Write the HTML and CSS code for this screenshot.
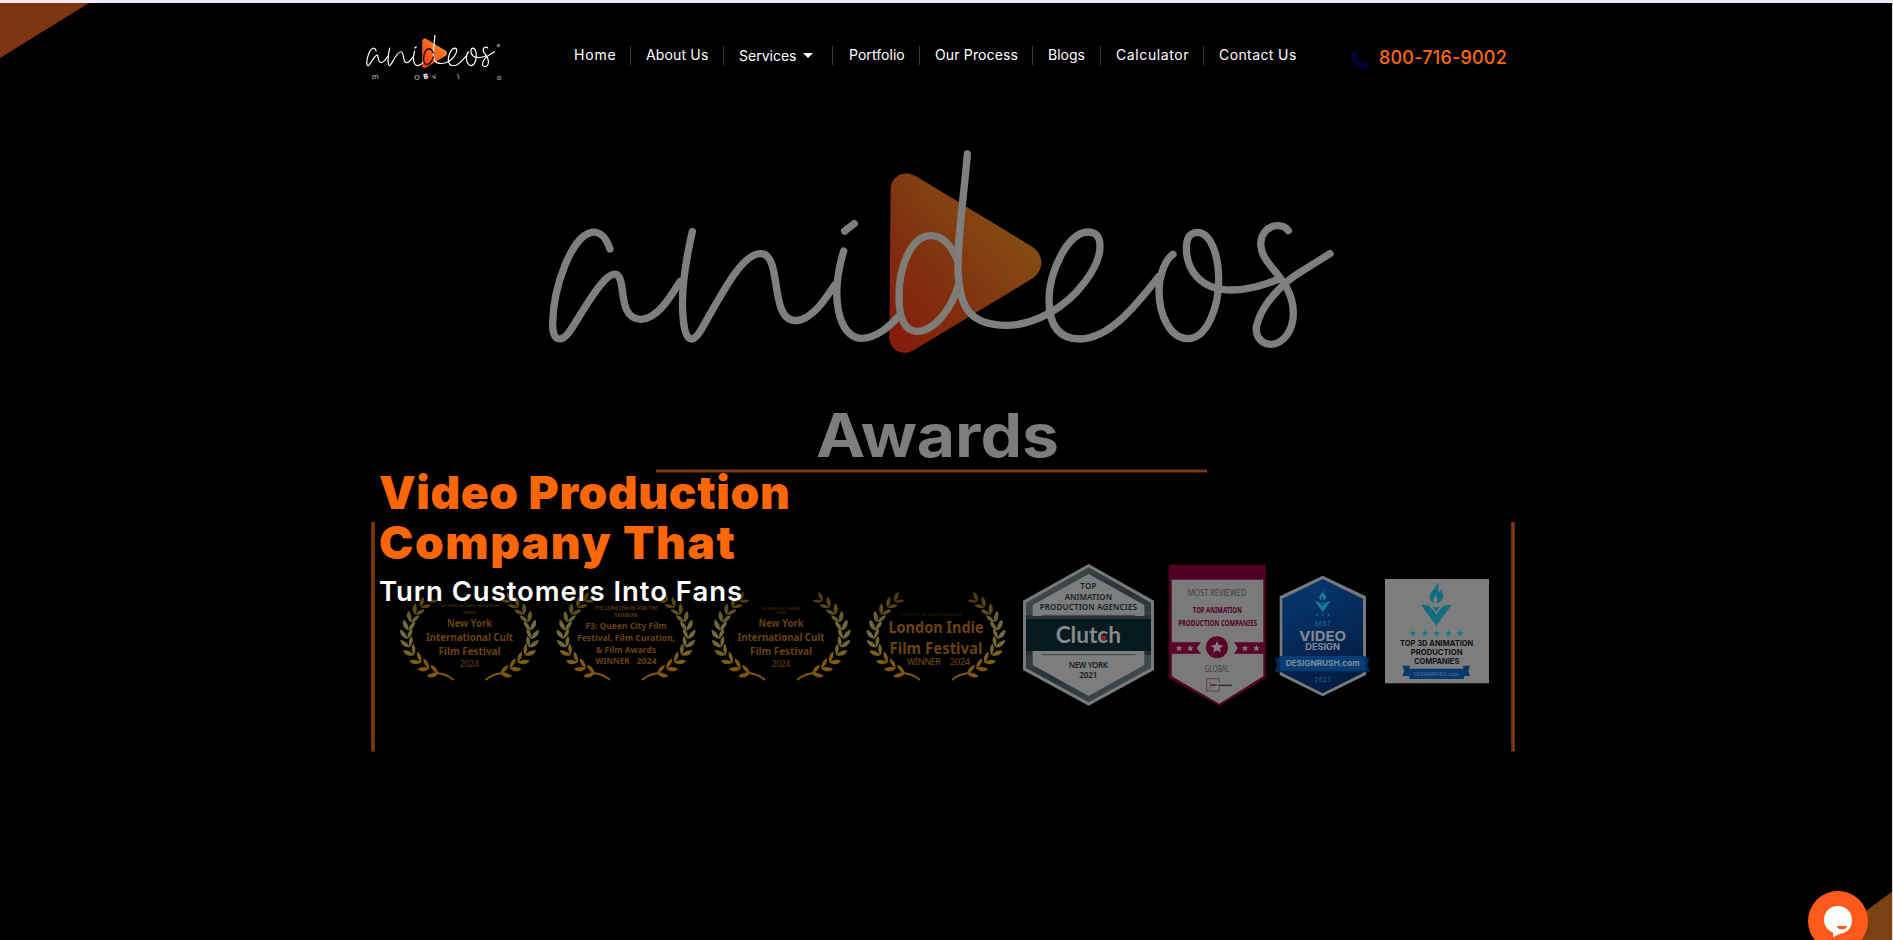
FILE: index.html
```html
<!DOCTYPE html>
<html lang="en">
<head>
<meta charset="utf-8">
<title>Anideos</title>
<link rel="stylesheet" href="styles.css">
</head>
<body>
<div class="page">
  <svg class="backdrop" viewBox="0 0 1893 940" width="1893" height="940" aria-hidden="true">
    <defs>
      <linearGradient id="playDim" x1="0" y1="1" x2="0.8" y2="0.2">
        <stop offset="0" stop-color="#85190b"/><stop offset="0.5" stop-color="#80330f"/><stop offset="1" stop-color="#864d13"/>
      </linearGradient>
      <linearGradient id="playBright" x1="0" y1="1" x2="0.8" y2="0.2">
        <stop offset="0" stop-color="#ff3a16"/><stop offset="0.5" stop-color="#ff5a1c"/><stop offset="1" stop-color="#ff8a24"/>
      </linearGradient>
      <linearGradient id="blue" x1="0" y1="0" x2="0.3" y2="1">
        <stop offset="0" stop-color="#073a72"/><stop offset="1" stop-color="#031c44"/>
      </linearGradient>
      <linearGradient id="steel" x1="0" y1="0" x2="1" y2="1">
        <stop offset="0" stop-color="#4a5254"/><stop offset="0.5" stop-color="#283235"/><stop offset="1" stop-color="#4a5254"/>
      </linearGradient>
      <path id="play" d="M1082 178C1082 136 1125 118 1158 139L1508 351C1543 375 1543 420 1508 445L1152 660C1118 682 1077 658 1078 622Z"/>
      <g id="script" fill="none" stroke-linecap="round" stroke-linejoin="round">
        <path d="M240 357C228 322 208 303 185 307C125 318 70 470 68 580C67 638 95 635 116 608C150 562 220 424 258 433C292 445 258 566 333 568C385 566 425 494 450 455"/>
        <path d="M487 305C465 400 452 500 460 570C467 640 490 637 510 605C560 522 630 372 690 371C760 368 715 567 795 572C845 572 890 502 914 465"/>
        <path d="M941 363C921 430 915 490 925 540C935 592 960 625 995 625C1040 623 1075 592 1105 560M944 303L973 281"/>
        <path d="M1312 72C1302 200 1278 350 1285 440C1292 520 1310 586 1430 586C1480 586 1520 570 1560 548C1640 505 1710 410 1710 350C1710 322 1700 306 1672 306C1610 310 1557 430 1557 510C1557 590 1590 627 1650 627C1745 625 1830 510 1886 440"/>
        <path d="M1929 373C1900 393 1887 450 1887 480C1887 560 1922 624 1973 626C2032 625 2066 530 2066 450C2066 370 2040 307 2002 307C1977 307 1969 330 1969 355C1970 420 2010 480 2105 480C2165 479 2205 462 2245 448"/>
        <path d="M2275 302C2266 288 2252 286 2240 287C2210 290 2189 315 2193 350C2198 410 2290 448 2290 550C2290 608 2255 643 2223 643C2190 643 2171 611 2182 580C2200 514 2268 452 2310 427C2340 408 2370 390 2400 371"/>
      </g>
      <path id="bowl" fill="none" stroke-linecap="round" d="M1284 395C1262 340 1232 317 1203 317C1148 317 1107 400 1107 500C1107 570 1128 604 1160 604C1215 604 1268 530 1285 465"/>
      <path id="leaves" d="M0 1C-6-1-8-5-7-10C-3-8 0-4 0 1ZM0 1C5-2 7-6 6-10C2-8 0-4 0 1Z"/>
      <g id="branch">
        <path d="M-16 100Q-24 93-35 93" fill="none" stroke="#80560c" stroke-width="1.800"/>
        <use href="#leaves" transform="translate(-32 93) rotate(-72) scale(.92)" fill="#80560c"/>
        <use href="#leaves" transform="translate(-41 88) rotate(-60) scale(.92)" fill="#80560c"/>
        <use href="#leaves" transform="translate(-49 82) rotate(-48) scale(.92)" fill="#7c5c15"/>
        <use href="#leaves" transform="translate(-56 74.500) rotate(-34) scale(.92)" fill="#786323"/>
        <use href="#leaves" transform="translate(-60 66.500) rotate(-20) scale(.92)" fill="#736733"/>
        <use href="#leaves" transform="translate(-62 58) rotate(-6) scale(.92)" fill="#706a3a"/>
        <use href="#leaves" transform="translate(-61 49.500) rotate(8) scale(.92)" fill="#706a3a"/>
        <use href="#leaves" transform="translate(-58.500 41.500) rotate(22) scale(.9)" fill="#665e2c"/>
        <use href="#leaves" transform="translate(-54 34) rotate(34) scale(.88)" fill="#5c4d1a"/>
        <use href="#leaves" transform="translate(-48 27) rotate(46) scale(.85)" fill="#574412"/>
        <use href="#leaves" transform="translate(-41 21) rotate(58) scale(.8)" fill="#523c0e"/>
      </g>
      <g id="wreath"><use href="#branch"/><use href="#branch" transform="scale(-1 1)"/></g>
      <path id="star" d="M0-10L3-3.5 10-3 4.5 1.5 6.2 8.5 0 4.8-6.2 8.5-4.5 1.5-10-3-3-3.500Z"/>
      <g id="torch">
        <path d="M-46 58L0 122L46 58L26 60Q14 66 0 88Q-14 66-26 60ZM-12 62L0 80L12 62Q0 70-12 62Z"/>
        <path d="M2-10C12 5 0 12 10 20Q14 16 13 10C28 32 20 48-2 56C8 42 2 36-2 28C-6 38-10 42-6 54C-26 42-22 26-10 14Q2 2 2-10Z"/>
      </g>
    </defs>

    <path d="M0 3H89L0 58Z" fill="#7f3512"/>
    <path d="M1893 891V940H1826Z" fill="#7a4214"/>

    <g transform="translate(530 130) scale(.33333)">
      <use href="#play" fill="url(#playDim)"/>
      <use href="#script" stroke="#7f7f7f" stroke-width="22"/>
      <use href="#bowl" stroke="#7f7c76" stroke-width="22"/>
    </g>

    <text class="awards" x="816" y="457" textLength="243" lengthAdjust="spacingAndGlyphs">Awards</text>
    <path d="M656 471H1207" stroke="#7b390e" stroke-width="3"/>
    <path d="M373 522V751.500M1513 522V751.500" stroke="#7d390b" stroke-width="3.600"/>

    <g transform="translate(469.500 580)">
      <use href="#wreath"/>
      <g class="laurel">
        <text class="tiny" y="26.500" textLength="59" lengthAdjust="spacingAndGlyphs">THE LEPRECHAUN AND THE RAINBOW</text>
        <text class="tiny" y="34" textLength="13" lengthAdjust="spacingAndGlyphs">WINNER</text>
        <text class="mid" y="47" textLength="45" lengthAdjust="spacingAndGlyphs">New York</text>
        <text class="mid" y="61" textLength="87" lengthAdjust="spacingAndGlyphs">International Cult</text>
        <text class="mid" y="75" textLength="62" lengthAdjust="spacingAndGlyphs">Film Festival</text>
        <text class="year" y="87" textLength="19">2024</text>
      </g>
    </g>
    <g transform="translate(626 580)">
      <use href="#wreath"/>
      <g class="laurel">
        <text class="tiny small" y="30" textLength="63" lengthAdjust="spacingAndGlyphs">THE LEPRECHAUN AND THE</text>
        <text class="tiny small" y="36.500" textLength="23" lengthAdjust="spacingAndGlyphs">RAINBOW</text>
        <text class="low" y="48.500" textLength="81" lengthAdjust="spacingAndGlyphs">F3: Queen City Film</text>
        <text class="low" y="60.500" textLength="98" lengthAdjust="spacingAndGlyphs">Festival, Film Curation,</text>
        <text class="low" y="72.500" textLength="60" lengthAdjust="spacingAndGlyphs">&amp; Film Awards</text>
        <text class="low" x="-13.500" y="84" textLength="34" lengthAdjust="spacingAndGlyphs">WINNER</text>
        <text class="low" x="20.500" y="84" textLength="20" lengthAdjust="spacingAndGlyphs">2024</text>
      </g>
    </g>
    <g transform="translate(781 580)">
      <use href="#wreath"/>
      <g class="laurel">
        <text class="tiny" y="30" textLength="39" lengthAdjust="spacingAndGlyphs">THE LEPRECHAUN AND THE RAINBOW</text>
        <text class="tiny" y="34" textLength="9" lengthAdjust="spacingAndGlyphs">WINNER</text>
        <text class="mid" y="47" textLength="45" lengthAdjust="spacingAndGlyphs">New York</text>
        <text class="mid" y="61" textLength="87" lengthAdjust="spacingAndGlyphs">International Cult</text>
        <text class="mid" y="75" textLength="62" lengthAdjust="spacingAndGlyphs">Film Festival</text>
        <text class="year" y="87" textLength="19">2024</text>
      </g>
    </g>
    <g transform="translate(936 580)">
      <use href="#wreath"/>
      <g class="laurel">
        <text class="tiny faint" x="-4" y="35.500" textLength="60" lengthAdjust="spacingAndGlyphs">THE LEPRECHAUN AND THE RAINBOW</text>
        <text class="big" y="52.500" textLength="95" lengthAdjust="spacingAndGlyphs">London Indie</text>
        <text class="big" y="73.500" textLength="93" lengthAdjust="spacingAndGlyphs">Film Festival</text>
        <text class="low thin" x="-12" y="85" textLength="34">WINNER</text>
        <text class="low thin" x="24" y="85" textLength="20">2024</text>
      </g>
    </g>

    <g transform="translate(1010 550) scale(.33333)" class="badge">
      <path d="M236 42L432 152V360L236 467L39 360V152Z" fill="#777a7b"/>
      <path d="M236 52L423 158V354L236 457L48 354V158Z" fill="url(#steel)"/>
      <path d="M236 72L403 165V345L236 438L68 345V165Z" fill="#7b7d7e"/>
      <path d="M48 196H423V315H48Z" fill="#273135"/>
      <path d="M68 303H403V318H68ZM68 190H403V198H68Z" fill="#7b7d7e"/>
      <path d="M48 207H423V303H48Z" fill="#071a20"/>
      <path d="M95 196H376M95 314H376" stroke="#3d4446" stroke-width="3"/>
      <g fill="#181c1e" class="clutch-copy">
        <text x="235" y="116" textLength="48">TOP</text>
        <text x="235" y="149" textLength="142">ANIMATION</text>
        <text x="235" y="181" textLength="292">PRODUCTION AGENCIES</text>
        <text x="235" y="353" textLength="118">NEW YORK</text>
        <text x="235" y="385" textLength="54">2021</text>
      </g>
      <text class="clutch-name" x="235" y="279" textLength="196" lengthAdjust="spacingAndGlyphs">Clutch</text>
      <circle cx="282" cy="264" r="8" fill="#8a211b"/>

      <path d="M476 44H767V384L628 468L476 384Z" fill="#520022"/>
      <path d="M485 89H760V379L628 461L485 379Z" fill="#7b7a7b"/>
      <path d="M478 277H573L560 294L573 311H478ZM766 277H672L684 294L672 311H766Z" fill="#5a0429"/>
      <circle cx="621" cy="292" r="33" fill="#5a0429"/>
      <g fill="#85787e">
        <use href="#star" transform="translate(621 292) scale(1.900)"/>
        <use href="#star" transform="translate(507 295)"/><use href="#star" transform="translate(541 295)"/>
        <use href="#star" transform="translate(705 295)"/><use href="#star" transform="translate(739 295)"/>
      </g>
      <text class="cond gray" x="621" y="138" textLength="176" lengthAdjust="spacingAndGlyphs">MOST REVIEWED</text>
      <text class="cond wine" x="622" y="190" textLength="147" lengthAdjust="spacingAndGlyphs">TOP ANIMATION</text>
      <text class="cond wine" x="623" y="228" textLength="237" lengthAdjust="spacingAndGlyphs">PRODUCTION COMPANIES</text>
      <text class="cond gray" x="621" y="365" textLength="73" lengthAdjust="spacingAndGlyphs">GLOBAL</text>
      <path d="M628 386H590V423H628V412M628 386V398M600 396V417" fill="none" stroke="#613b46" stroke-width="3"/>
      <path d="M603 405H620" stroke="#52222f" stroke-width="5"/><path d="M624 406H666" stroke="#333" stroke-width="5"/>
    </g>

    <g transform="translate(1260 550) scale(.33333)" class="badge">
      <path d="M188 77L318 139V375L188 439L59 375V139Z" fill="#77797c"/>
      <path d="M188 87L309 146V369L188 430L67 369V146Z" fill="url(#blue)"/>
      <path d="M43 323H330L323 344L330 367H43L51 344Z" fill="#04284f"/>
      <path d="M59 318H317V362H59Z" fill="#073d74"/>
      <use href="#torch" transform="translate(188 125) scale(.500)" fill="#137f9a"/>
      <g fill="#137f9a"><use href="#star" transform="translate(170 194) scale(.400)"/><use href="#star" transform="translate(188 194) scale(.400)"/><use href="#star" transform="translate(206 194) scale(.400)"/></g>
      <text class="geo teal" x="188" y="229" textLength="48">BEST</text>
      <text class="geo video" x="188" y="272" textLength="140" lengthAdjust="spacingAndGlyphs">VIDEO</text>
      <text class="geo design" x="188" y="299" textLength="104" lengthAdjust="spacingAndGlyphs">DESIGN</text>
      <text class="geo site" x="188" y="348" textLength="222" lengthAdjust="spacingAndGlyphs">DESIGNRUSH.com</text>
      <text class="geo teal" x="188" y="396" textLength="49">2023</text>

      <path d="M375 87H687V400H375Z" fill="#7d7d7e"/>
      <use href="#torch" transform="translate(529 106)" fill="#126d83"/>
      <g fill="#137b91"><use href="#star" transform="translate(459 250)"/><use href="#star" transform="translate(495 250)"/><use href="#star" transform="translate(530 250)"/><use href="#star" transform="translate(565 250)"/><use href="#star" transform="translate(600 250)"/></g>
      <g class="geo dark">
        <text x="530" y="289" textLength="220" lengthAdjust="spacingAndGlyphs">TOP 3D ANIMATION</text>
        <text x="530" y="316" textLength="155" lengthAdjust="spacingAndGlyphs">PRODUCTION</text>
        <text x="530" y="343" textLength="136" lengthAdjust="spacingAndGlyphs">COMPANIES</text>
      </g>
      <path d="M427 347H449V378H427L433 362ZM630 347H610V378H630L625 362Z" fill="#063867"/>
      <path d="M448 356H612V387H448Z" fill="#06396f"/>
      <text class="geo mini" x="529" y="377" textLength="134" lengthAdjust="spacingAndGlyphs">DESIGNRUSH.com</text>
    </g>
  </svg>

  <header class="header">
    <a class="logo">
      <svg width="140" height="52" viewBox="0 0 140 52">
        <g transform="translate(0 -1.600) scale(.0548)">
          <use href="#play" fill="url(#playBright)"/>
          <use href="#script" stroke="#fff" stroke-width="22"/>
          <use href="#bowl" stroke="#1b0b06" stroke-width="24"/>
        </g>
        <circle cx="135.500" cy="12.500" r="1.700" fill="#777"/>
        <g class="logo-copy">
          <text transform="translate(9 46.500) rotate(-8)">m</text>
          <text transform="translate(51 46.500)">O</text>
          <text class="block" transform="translate(61 46.500) rotate(-15)">B</text>
          <text transform="translate(70 46.500) rotate(-20)">v</text>
          <text transform="translate(95 46.500) rotate(-15)">l</text>
          <text transform="translate(133.500 46.500) rotate(12)">o</text>
        </g>
      </svg>
    </a>
    <nav class="nav">
      <a class="item home">Home</a>
      <a class="item about">About Us</a>
      <a class="item services">Services<span class="caret"></span></a>
      <a class="item portfolio">Portfolio</a>
      <a class="item process">Our Process</a>
      <a class="item blogs">Blogs</a>
      <a class="item calc">Calculator</a>
      <a class="item contact">Contact Us</a>
    </nav>
    <a class="phone">
      <svg width="18" height="18" viewBox="0 0 18 18"><path d="M0 2Q0 1 1 .7L4.300 0Q5.300-.1 5.800 1L7.200 4.600Q7.500 5.500 6.800 6.200L5 7.700Q6.700 11.300 10.200 13L11.800 11.200Q12.500 10.500 13.400 10.900L17 12.400Q18 12.900 17.900 13.800L17.200 17Q16.900 18 15.900 18C7 18 0 11 0 2Z" fill="#00043c"/></svg>
      <span>800-716-9002</span>
    </a>
  </header>

  <main class="hero">
    <h1 class="title"><span class="line one">Video Production</span><span class="line two">Company That</span></h1>
    <p class="subtitle">Turn Customers Into Fans</p>
  </main>

  <button class="chat" aria-label="Chat">
    <svg width="60" height="60" viewBox="0 0 60 60">
      <circle cx="30" cy="30" r="30" fill="#ff5a1c"/>
      <path d="M30 15C22 15 16 21 16 29C16 35 20 39.500 25 41.500V46L33 42.500C40 41.500 44 36 44 29C44 21 38 15 30 15Z" fill="#fff"/>
      <path d="M28.500 35H39Q38 38.500 34 38.500T28.500 35Z" fill="#ff5a1c"/>
    </svg>
  </button>
</div>
</body>
</html>
```
FILE: styles.css
```css
* { box-sizing: border-box; }

body {
  margin: 0;
  background: #000;
  font-family: Inter, "Open Sans", sans-serif;
  color: #fff;
}

.page {
  position: relative;
  width: 1893px;
  height: 940px;
  overflow: hidden;
  background: #000;
  border-top: 3px solid #f2eaf5;
  border-right: 1px solid #dcdcdc;
}

.backdrop {
  position: absolute;
  top: -3px;
  left: 0;
}

.header {
  position: relative;
  display: flex;
  align-items: flex-start;
  padding: 30px 0 0 363px;
  height: 104px;
}

.logo { width: 140px; margin-right: 56px; }
.logo svg { display: block; }
.logo-copy { font: 600 7.500px "Noto Sans", sans-serif; fill: #999; }
.logo-copy .block { font-weight: 900; fill: #ddd; }

.nav { display: flex; padding-top: 13px; }
.item {
  height: 19px;
  padding-left: 15px;
  border-right: 1px solid #393939;
  font-size: 14px;
  line-height: 18px;
  white-space: nowrap;
}
.home { width: 72px; letter-spacing: 0.8px; }
.about { width: 93px; letter-spacing: 0.15px; }
.services { display: flex; align-items: center; width: 109px; }
.portfolio { width: 87px; padding-left: 16px; letter-spacing: 0.05px; }
.process { width: 113px; letter-spacing: 0.15px; }
.blogs { width: 68px; }
.calc { width: 103px; letter-spacing: 0.6px; }
.contact { width: 94px; border-right: 0; letter-spacing: 0.4px; }
.caret {
  margin-left: 7px;
  border: 5.5px solid transparent;
  border-top: 5.5px solid #fff;
  border-bottom: 0;
}

.phone {
  display: flex;
  align-items: center;
  gap: 10px;
  margin: 14px 0 0 53px;
  font-size: 18px;
  font-weight: 500;
  letter-spacing: 0.2px;
  line-height: 22px;
  color: #ff6a0a;
  white-space: nowrap;
}
.phone svg { margin-top: 4px; }

.hero { position: relative; padding: 360px 0 0 379px; }
.title { margin: 0; font-size: 46px; font-weight: 900; line-height: 50px; color: #ff6608; }
.line { display: block; }
.one { letter-spacing: 0.65px; }
.two { letter-spacing: 1.55px; }
.subtitle { margin: 7px 0 0; font-size: 27.5px; font-weight: 600; line-height: 34px; letter-spacing: 0.95px; }

.chat {
  position: absolute;
  left: 1808px;
  top: 888px;
  width: 60px;
  height: 60px;
  padding: 0;
  border: 0;
  background: none;
}

.awards { font: 700 60px Inter, sans-serif; fill: #7d7d7d; }
.laurel { font-family: "Noto Sans", sans-serif; fill: #69420c; text-anchor: middle; }
.laurel .tiny { font-size: 3.200px; fill: #553808; }
.laurel .small { font-size: 4.500px; font-weight: 700; }
.laurel .faint { fill: #332306; }
.laurel .mid { font-size: 10.500px; font-weight: 700; }
.laurel .low { font-size: 9px; font-weight: 700; }
.laurel .thin { font-weight: 500; }
.laurel .big { font-size: 15.500px; font-weight: 700; }
.laurel .year { font-size: 9px; fill: #5c4318; }
.badge { text-anchor: middle; }
.clutch-copy { font: 600 24px "Noto Sans", sans-serif; }
.clutch-name { font: 700 66px Lato, sans-serif; fill: #858a8c; }
.cond { font-family: "Noto Sans", sans-serif; }
.gray { font-size: 27px; fill: #414141; }
.wine { font-size: 24px; font-weight: 700; fill: #550026; }
.geo { font-family: Inter, sans-serif; font-weight: 700; }
.teal { font-size: 17px; fill: #136c87; font-weight: 500; }
.video { font-size: 41px; fill: #858a92; }
.design { font-size: 25px; fill: #858a92; }
.site { font-size: 24px; fill: #7f8d9c; }
.dark { font-size: 24px; fill: #111; }
.mini { font-size: 15px; fill: #3c6689; }
```
